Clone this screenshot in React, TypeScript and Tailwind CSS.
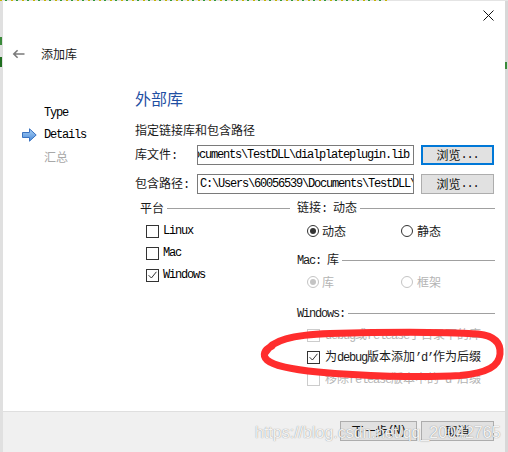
import React from "react";

const MONO = "font-['Liberation_Mono',monospace] text-[12px] tracking-[-1.2px] text-black";

// split ASCII runs out so Latin text gets the narrow mono face
function Mixed({ text }: { text: string }) {
  const parts = text.match(/[\x20-\x7e\u2018\u2019]+|[^\x20-\x7e\u2018\u2019]+/g) ?? [];
  return (
    <>
      {parts.map((p, i) =>
        /^[\x20-\x7e\u2018\u2019]/.test(p) ? (
          <span key={i} className="font-['Liberation_Mono',monospace] text-[12px] tracking-[-1.2px] whitespace-pre">
            {p}
          </span>
        ) : (
          <span key={i}>{p}</span>
        )
      )}
    </>
  );
}

function Check({ checked, disabled }: { checked?: boolean; disabled?: boolean }) {
  return (
    <span
      className={`flex h-[13px] w-[13px] shrink-0 items-center justify-center border bg-white ${
        disabled ? "border-[#cccccc]" : "border-[#333333]"
      }`}
    >
      {checked && (
        <svg width="9" height="8" viewBox="0 0 9 8">
          <path d="M0.6 4.2l2.8 2.8L8.4 0.8" fill="none" stroke="#333" strokeWidth="1" />
        </svg>
      )}
    </span>
  );
}

function Radio({ checked, disabled }: { checked?: boolean; disabled?: boolean }) {
  return (
    <span
      className={`flex h-[12px] w-[12px] shrink-0 items-center justify-center rounded-full border bg-white ${
        disabled ? "border-[#c4c4c4]" : "border-[#333333]"
      }`}
    >
      {checked && (
        <span className={`h-[6px] w-[6px] rounded-full ${disabled ? "bg-[#c4c4c4]" : "bg-[#333333]"}`} />
      )}
    </span>
  );
}

function GroupTitle({ text, className = "" }: { text: string; className?: string }) {
  return (
    <div className={`flex h-[22px] items-center gap-[3px] ${className}`}>
      <span className="whitespace-nowrap">
        <Mixed text={text} />
      </span>
      <span className="h-px flex-1 bg-[#a0a0a0]" />
    </div>
  );
}

function Button({ children, focused, className = "" }: { children: React.ReactNode; focused?: boolean; className?: string }) {
  return (
    <div
      className={`flex h-[20px] shrink-0 items-center justify-center bg-[#e1e1e1] text-[#111] ${
        focused ? "border-2 border-[#0078d7]" : "border border-[#adadad]"
      } ${className}`}
    >
      {children}
    </div>
  );
}

function NavArrow() {
  return (
    <svg width="15" height="14" viewBox="0 0 15 14">
      <defs>
        <linearGradient id="navArrowFill" x1="0" y1="0" x2="0" y2="1">
          <stop offset="0" stopColor="#a9d0f5" />
          <stop offset="1" stopColor="#4a8ad8" />
        </linearGradient>
      </defs>
      <path d="M0.5 4.5H7.5V0.8L14.2 7 7.5 13.2V9.5H0.5Z" fill="url(#navArrowFill)" stroke="#3a72c0" strokeWidth="1" strokeLinejoin="round" />
    </svg>
  );
}

export default function App() {
  return (
    <div className="relative flex h-[452px] w-[508px] flex-col overflow-hidden bg-[#e4e4e4] font-['Noto_Sans_CJK_SC',sans-serif] text-[12px] text-[#1a1a1a]">
      {/* editor text peeking above the dialog */}
      <div className="h-[1px] w-[390px] shrink-0 bg-[repeating-linear-gradient(90deg,#c9b300_0_2px,transparent_2px_5px,#2e9a3a_5px_7px,transparent_7px_11px)]" />
      <div className="flex flex-1">
        <div className="flex w-[3px] shrink-0 flex-col bg-[#e0e0e0]">
          <span className="mt-[36px] h-[8px] w-[2px] bg-[#3b8a3b]" />
          <span className="mt-[12px] h-[10px] w-[2px] bg-[#1f6e1f]" />
        </div>

        {/* dialog */}
        <div className="flex w-[502px] shrink-0 flex-col bg-white">
          <div className="flex h-[36px] shrink-0 justify-end pr-[11px] pt-[9px]">
            <svg width="11" height="11" viewBox="0 0 11 11">
              <path d="M0.5 0.5l10 10M10.5 0.5l-10 10" stroke="#111" strokeWidth="1" />
            </svg>
          </div>
          <div className="flex h-[34px] shrink-0 items-center pl-[9px]">
            <svg width="13" height="10" viewBox="0 0 13 10">
              <path d="M12.5 5H1.8M5.6 1.2L1.8 5l3.8 3.8" fill="none" stroke="#7a7a7a" strokeWidth="1.6" />
            </svg>
            <span className="ml-[16px] text-[12px] text-[#1a1a1a]">添加库</span>
          </div>

          <div className="flex flex-1">
            {/* wizard steps */}
            <div className="flex w-[132px] shrink-0 flex-col pt-[31px]">
              <div className="flex h-[22px] items-center pl-[41px]">
                <span className={MONO}>Type</span>
              </div>
              <div className="flex h-[22px] items-center pl-[19px]">
                <NavArrow />
                <span className={`ml-[7px] ${MONO}`}>Details</span>
              </div>
              <div className="flex h-[22px] items-center pl-[41px] text-[#a8a8a8]">汇总</div>
            </div>

            {/* page */}
            <div className="flex flex-1 flex-col pr-[10px] pt-[17px]">
              <div className="h-[20px] text-[16px] leading-[20px] text-[#1f4fa3]">外部库</div>
              <div className="mt-[12px] h-[20px] leading-[20px]">指定链接库和包含路径</div>

              <div className="mt-[5px] flex h-[20px] items-center">
                <span className="w-[62px] shrink-0">
                  <Mixed text="库文件:" />
                </span>
                <div className="flex h-[20px] w-[217px] shrink-0 items-center justify-end overflow-hidden border border-[#7a7a7a] pr-[4px]">
                  <span className={`${MONO} shrink-0 whitespace-nowrap`}>
                    C:\Users\60056539\Documents\TestDLL\dialplateplugin.lib
                  </span>
                </div>
                <Button focused className="ml-[7px] w-[73px]">
                  <Mixed text="浏览..." />
                </Button>
              </div>

              <div className="mt-[9px] flex h-[20px] items-center">
                <span className="w-[62px] shrink-0">
                  <Mixed text="包含路径:" />
                </span>
                <div className="flex h-[20px] w-[217px] shrink-0 items-center overflow-hidden border border-[#7a7a7a] pl-[2px]">
                  <span className={`${MONO} shrink-0 whitespace-nowrap`}>
                    C:\Users\60056539\Documents\TestDLL\include
                  </span>
                </div>
                <Button className="ml-[7px] w-[73px]">
                  <Mixed text="浏览..." />
                </Button>
              </div>

              <div className="mt-[3px] flex">
                {/* platform */}
                <div className="flex w-[155px] shrink-0 flex-col pl-[5px]">
                  <GroupTitle text="平台" />
                  <div className="mt-[1px] flex flex-col pl-[6px]">
                    {[
                      ["Linux", false],
                      ["Mac", false],
                      ["Windows", true],
                    ].map(([label, on]) => (
                      <div key={label as string} className="flex h-[22px] items-center gap-[4px]">
                        <Check checked={on as boolean} />
                        <span className={MONO}>{label}</span>
                      </div>
                    ))}
                  </div>
                </div>

                {/* linkage */}
                <div className="ml-[7px] flex flex-1 flex-col">
                  <GroupTitle text="链接: 动态" />
                  <div className="mt-[1px] flex h-[22px] items-center pl-[10px]">
                    <div className="flex w-[94px] items-center gap-[3px]">
                      <Radio checked />
                      <span>动态</span>
                    </div>
                    <div className="flex items-center gap-[4px]">
                      <Radio />
                      <span>静态</span>
                    </div>
                  </div>

                  <GroupTitle text="Mac: 库" className="mt-[7px]" />
                  <div className="flex h-[22px] items-center pl-[10px] text-[#b4b4b4]">
                    <div className="flex w-[94px] items-center gap-[3px]">
                      <Radio checked disabled />
                      <span>库</span>
                    </div>
                    <div className="flex items-center gap-[4px]">
                      <Radio disabled />
                      <span>框架</span>
                    </div>
                  </div>

                  <GroupTitle text="Windows:" className="mt-[9px]" />
                  <div className="flex flex-col pl-[10px]">
                    <div className="flex h-[22px] items-center gap-[5px] text-[#b4b4b4]">
                      <Check disabled />
                      <span className="whitespace-nowrap">
                        <Mixed text="debug或release子目录下的库" />
                      </span>
                    </div>
                    <div className="flex h-[22px] items-center gap-[5px]">
                      <Check checked />
                      <span className="whitespace-nowrap">
                        <Mixed text="为debug版本添加’d’作为后缀" />
                      </span>
                    </div>
                    <div className="flex h-[22px] items-center gap-[5px] text-[#b4b4b4]">
                      <Check disabled />
                      <span className="whitespace-nowrap">
                        <Mixed text="移除release版本中的’d’后缀" />
                      </span>
                    </div>
                  </div>
                </div>
              </div>
            </div>
          </div>

          {/* footer */}
          <div className="flex h-[41px] shrink-0 justify-end gap-[4px] border-t border-[#dfdfdf] bg-[#f0f0f0] pr-[11px] pt-[9px]">
            <Button className="w-[77px]">
              <Mixed text="下一步(N)" />
            </Button>
            <Button className="w-[73px]">取消</Button>
          </div>
        </div>

        <div className="flex w-[3px] shrink-0 flex-col bg-[#d8d8d8]">
          <span className="mt-[61px] h-[7px] w-[2px] bg-[#3b8a3b]" />
        </div>
      </div>

      {/* hand-drawn red marker around the suffix option */}
      <svg className="pointer-events-none absolute left-0 top-0" width="508" height="452" viewBox="0 0 508 452">
        <path
          d="M266 352 C 272 340, 292 335, 330 333.5 C 380 332, 440 331.5, 478 334 C 496 336, 501 344, 500 354 C 499 366, 488 373, 460 375.5 C 420 378, 360 376, 318 372 C 292 369.5, 274 366, 267 360 C 262 355, 264 350, 272 346"
          fill="none"
          stroke="#ff2d2d"
          strokeWidth="7"
          strokeLinecap="round"
          strokeLinejoin="round"
        />
      </svg>

      {/* blog watermark */}
      <div className="pointer-events-none absolute left-[255px] top-[423px] whitespace-nowrap font-['Liberation_Sans',sans-serif] text-[16px] leading-[20px] text-white/90 [text-shadow:0_0_1px_rgba(0,0,0,0.5)]">
        https://blog.csdn.net/qq_20042765
      </div>
    </div>
  );
}
